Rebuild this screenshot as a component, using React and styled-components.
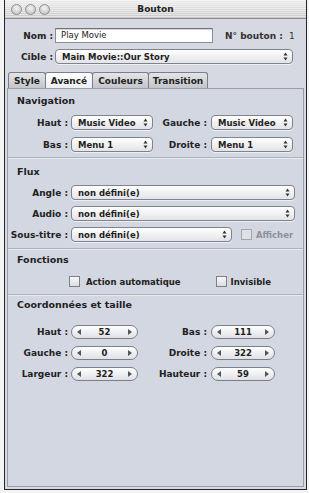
import styled, { createGlobalStyle } from "styled-components";

const Global = createGlobalStyle`
  body {
    margin: 0;
    background: #f4f4f4;
    font-family: "DejaVu Sans", "Liberation Sans", sans-serif;
  }
`;

const Window = styled.div`
  margin-left: 4px;
  width: 303px;
  height: 490px;
  box-sizing: border-box;
  border: 1px solid #262626;
  border-top: none;
  background: #d6d9e1;
  display: flex;
  flex-direction: column;
`;

const TitleBar = styled.div`
  height: 18px;
  flex: none;
  position: relative;
  display: flex;
  align-items: center;
  justify-content: center;
  border-bottom: 1px solid #8c8c8c;
  background: repeating-linear-gradient(
      180deg,
      rgba(255, 255, 255, 0.45) 0px,
      rgba(255, 255, 255, 0.45) 1px,
      rgba(0, 0, 0, 0) 1px,
      rgba(0, 0, 0, 0) 2px
    ),
    linear-gradient(#ececec, #cacaca);
  font-size: 9px;
  font-weight: bold;
  color: #1e1e1e;
`;

const Lights = styled.div`
  position: absolute;
  left: 6px;
  top: 4px;
  display: flex;
  gap: 3px;
`;

const Light = styled.span`
  width: 9px;
  height: 9px;
  border-radius: 50%;
  border: 1px solid #8f8f8f;
  background: radial-gradient(circle at 50% 35%, #f4f4f4, #b9b9b9);
`;

const Header = styled.div`
  padding: 9px 0 0 3px;
  display: flex;
  flex-direction: column;
  gap: 6px;
`;

const Row = styled.div`
  display: flex;
  align-items: center;
  height: 15px;
`;

const Label = styled.div`
  width: ${({ w }) => w}px;
  flex: none;
  text-align: right;
  font-size: 9px;
  font-weight: bold;
  color: #222;
  white-space: nowrap;
  margin-right: ${({ gap }) => (gap == null ? 3 : gap)}px;
`;

const TextInput = styled.div`
  width: ${({ w }) => w}px;
  height: 15px;
  box-sizing: border-box;
  border: 1px solid #8a8d94;
  border-top-color: #6f7279;
  background: #fff;
  box-shadow: inset 0 1px 1px rgba(0, 0, 0, 0.18);
  font-size: 8.5px;
  color: #222;
  padding-left: 5px;
  line-height: 13px;
`;

const Plain = styled.div`
  font-size: 9px;
  font-weight: bold;
  color: #333;
  margin-left: ${({ ml }) => ml || 0}px;
  white-space: nowrap;
`;

const PlainValue = styled.span`
  font-weight: normal;
`;

const SelectBox = styled.div`
  width: ${({ w }) => w}px;
  height: 15px;
  flex: none;
  box-sizing: border-box;
  border: 1px solid #80838b;
  border-radius: 4px;
  background: linear-gradient(#ffffff, #f1f1f3 50%, #e3e4e8);
  box-shadow: 0 1px 0 rgba(255, 255, 255, 0.6);
  display: flex;
  align-items: center;
  justify-content: space-between;
  padding: 0 4px 0 6px;
  font-size: 8.5px;
  font-weight: bold;
  color: #1e1e1e;
  white-space: nowrap;
`;

const Updown = () => (
  <svg width="5" height="9" viewBox="0 0 5 9">
    <path d="M2.5 0.5 L4.5 3.5 L0.5 3.5 Z" fill="#333" />
    <path d="M2.5 8.5 L4.5 5.5 L0.5 5.5 Z" fill="#333" />
  </svg>
);

const Select = ({ w, children }) => (
  <SelectBox w={w}>
    <span>{children}</span>
    <Updown />
  </SelectBox>
);

const Tabs = styled.div`
  display: flex;
  padding-left: 3px;
  margin-top: 8px;
  height: 16px;
  align-items: flex-end;
`;

const Tab = styled.div`
  width: ${({ w }) => w}px;
  height: 16px;
  box-sizing: border-box;
  margin-right: -1px;
  border: 1px solid #7b7e86;
  border-bottom: none;
  border-radius: 3px 3px 0 0;
  background: ${({ active }) =>
    active
      ? "linear-gradient(#ffffff, #eceef2)"
      : "linear-gradient(#e4e5e8, #c3c5ca)"};
  font-size: 9px;
  font-weight: bold;
  color: #222;
  display: flex;
  align-items: center;
  justify-content: center;
  position: relative;
  z-index: ${({ active }) => (active ? 1 : 0)};
`;

const Panel = styled.div`
  flex: 1;
  margin: 0 2px 2px 2px;
  border: 1px solid #9a9da5;
  background: #d3d7e1;
  display: flex;
  flex-direction: column;
`;

const Section = styled.div`
  padding: ${({ pt }) => pt}px 0 ${({ pb }) => pb}px 0;
  border-bottom: ${({ last }) => (last ? "none" : "1px solid #adb1bb")};
  box-shadow: ${({ last }) => (last ? "none" : "0 1px 0 #e8eaef")};
`;

const Heading = styled.div`
  height: 14px;
  line-height: 14px;
  padding-left: 9px;
  font-size: 9.5px;
  font-weight: bold;
  color: #1e1e1e;
`;

const Rows = styled.div`
  margin-top: ${({ mt }) => mt}px;
  display: flex;
  flex-direction: column;
  gap: ${({ gap }) => gap}px;
`;

const CheckItem = styled.div`
  display: flex;
  align-items: center;
  margin-left: ${({ ml }) => ml}px;
  font-size: 8.5px;
  font-weight: bold;
  color: ${({ disabled }) => (disabled ? "#8e9097" : "#222")};
  white-space: nowrap;
`;

const Box = styled.span`
  width: 11px;
  height: 11px;
  box-sizing: border-box;
  border: 1px solid ${({ disabled }) => (disabled ? "#a3a6ad" : "#7d8088")};
  background: ${({ disabled }) =>
    disabled ? "#dfe1e6" : "linear-gradient(#f8f8f8, #dcdde1)"};
  margin-right: ${({ gap }) => gap}px;
  flex: none;
`;

const StepperBox = styled.div`
  width: ${({ w }) => w}px;
  height: 14px;
  flex: none;
  box-sizing: border-box;
  border: 1px solid #7c7f87;
  border-radius: 7px;
  background: linear-gradient(#ffffff, #eceef1 55%, #dfe1e5);
  display: flex;
  align-items: center;
  justify-content: space-between;
  padding: 0 5px;
  font-size: 8.5px;
  font-weight: bold;
  color: #1e1e1e;
`;

const Arrow = ({ dir }) => (
  <svg width="4" height="6" viewBox="0 0 4 6">
    <path
      d={dir === "left" ? "M0 3 L4 0 L4 6 Z" : "M4 3 L0 0 L0 6 Z"}
      fill="#555"
    />
  </svg>
);

const Stepper = ({ w, value }) => (
  <StepperBox w={w}>
    <Arrow dir="left" />
    <span>{value}</span>
    <Arrow dir="right" />
  </StepperBox>
);

export default function App() {
  return (
    <>
      <Global />
      <Window>
        <TitleBar>
          <Lights>
            <Light />
            <Light />
            <Light />
          </Lights>
          Bouton
        </TitleBar>

        <Header>
          <Row>
            <Label w={45} gap={2}>
              Nom :
            </Label>
            <TextInput w={158}>Play Movie</TextInput>
            <Plain ml={12}>
              N° bouton :&nbsp;&nbsp;<PlainValue>1</PlainValue>
            </Plain>
          </Row>
          <Row>
            <Label w={45} gap={2}>
              Cible :
            </Label>
            <Select w={238}>Main Movie::Our Story</Select>
          </Row>
        </Header>

        <Tabs>
          <Tab w={38}>Style</Tab>
          <Tab w={48} active>
            Avancé
          </Tab>
          <Tab w={57}>Couleurs</Tab>
          <Tab w={60}>Transition</Tab>
        </Tabs>

        <Panel>
          <Section pt={5} pb={5}>
            <Heading>Navigation</Heading>
            <Rows mt={7} gap={7}>
              <Row>
                <Label w={60}>Haut :</Label>
                <Select w={82}>Music Video</Select>
                <Label w={54} gap={4}>
                  Gauche :
                </Label>
                <Select w={82}>Music Video</Select>
              </Row>
              <Row>
                <Label w={60}>Bas :</Label>
                <Select w={82}>Menu 1</Select>
                <Label w={54} gap={4}>
                  Droite :
                </Label>
                <Select w={82}>Menu 1</Select>
              </Row>
            </Rows>
          </Section>

          <Section pt={7} pb={6}>
            <Heading>Flux</Heading>
            <Rows mt={6} gap={6}>
              <Row>
                <Label w={60}>Angle :</Label>
                <Select w={224}>non défini(e)</Select>
              </Row>
              <Row>
                <Label w={60}>Audio :</Label>
                <Select w={224}>non défini(e)</Select>
              </Row>
              <Row>
                <Label w={60}>Sous-titre :</Label>
                <Select w={161}>non défini(e)</Select>
                <CheckItem ml={9} disabled>
                  <Box gap={4} disabled />
                  Afficher
                </CheckItem>
              </Row>
            </Rows>
          </Section>

          <Section pt={4} pb={5}>
            <Heading>Fonctions</Heading>
            <Rows mt={7} gap={0}>
              <Row>
                <CheckItem ml={61}>
                  <Box gap={6} />
                  Action automatique
                </CheckItem>
                <CheckItem ml={35}>
                  <Box gap={4} />
                  Invisible
                </CheckItem>
              </Row>
            </Rows>
          </Section>

          <Section pt={3} pb={0} last>
            <Heading>Coordonnées et taille</Heading>
            <Rows mt={12} gap={6}>
              <Row>
                <Label w={60}>Haut :</Label>
                <Stepper w={67} value="52" />
                <Label w={69} gap={4}>
                  Bas :
                </Label>
                <Stepper w={64} value="111" />
              </Row>
              <Row>
                <Label w={60}>Gauche :</Label>
                <Stepper w={67} value="0" />
                <Label w={69} gap={4}>
                  Droite :
                </Label>
                <Stepper w={64} value="322" />
              </Row>
              <Row>
                <Label w={60}>Largeur :</Label>
                <Stepper w={67} value="322" />
                <Label w={69} gap={4}>
                  Hauteur :
                </Label>
                <Stepper w={64} value="59" />
              </Row>
            </Rows>
          </Section>
        </Panel>
      </Window>
    </>
  );
}
